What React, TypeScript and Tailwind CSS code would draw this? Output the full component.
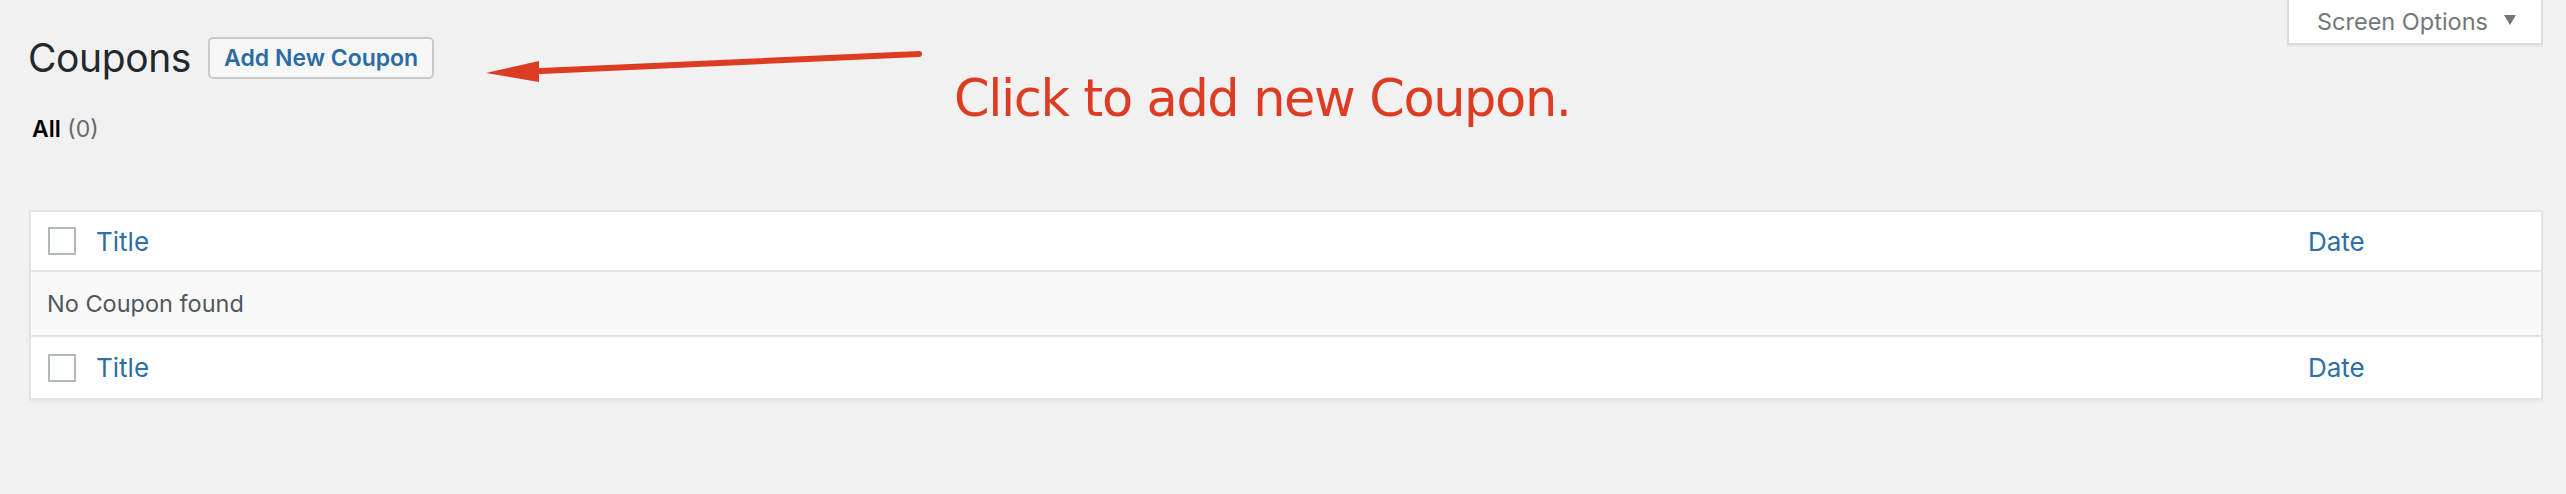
import React from 'react'

const font = { fontFamily: 'Inter, "Noto Sans", sans-serif' }

function Checkbox() {
  return <span className="block h-[28px] w-[28px] shrink-0 border-2 border-[#b4b9be] bg-white" />
}

function HeadRow({ last }: { last?: boolean }) {
  return (
    <div
      className={
        'flex items-center bg-white pl-[17px] ' +
        (last ? 'h-[61px]' : 'h-[60px] border-b-2 border-[#e2e4e7]')
      }
    >
      <Checkbox />
      <span className="ml-[20px] flex-1 text-[26px] text-[#2f6ea6]">Title</span>
      <span className="w-[233px] text-[26px] text-[#2f6ea6]">Date</span>
    </div>
  )
}

function Annotation() {
  return (
    <>
      <svg
        className="pointer-events-none absolute left-0 top-0"
        width="1000"
        height="120"
        viewBox="0 0 1000 120"
        aria-hidden="true"
      >
        <line x1="919" y1="54" x2="530" y2="71.5" stroke="#dc3c22" strokeWidth="6" strokeLinecap="round" />
        <polygon points="486,73 539,61 539,82" fill="#dc3c22" />
      </svg>
      <p
        className="pointer-events-none absolute left-[954px] top-[73px] whitespace-nowrap text-[51px] leading-[51px] tracking-[-1.4px] text-[#de3c22]"
        style={{ fontFamily: '"DejaVu Sans", Verdana, sans-serif' }}
      >
        Click to add new Coupon.
      </p>
    </>
  )
}

export default function App() {
  return (
    <div className="relative h-[494px] w-full overflow-hidden bg-[#f1f1f1] pl-[28px] pr-[23px]" style={font}>
      <div className="flex items-start justify-between">
        <div className="mt-[37px] flex items-center gap-[17px]">
          <h1 className="text-[39px] leading-[42px] font-normal tracking-[-0.4px] text-[#23282d]">Coupons</h1>
          <button
            type="button"
            className="h-[42px] rounded-[5px] border-2 border-[#c9cacb] bg-[#f7f7f7] px-[14px] text-[23px] font-semibold leading-none text-[#2b6ca3]"
          >
            Add New Coupon
          </button>
        </div>
        <button
          type="button"
          className="flex h-[45px] w-[256px] items-center border-x-2 border-b-2 border-[#dcdcdc] bg-white pl-[28px] text-[23.5px] text-[#72777c] shadow-[0_2px_0_rgba(0,0,0,0.04)]"
        >
          Screen Options
          <svg className="ml-[16px] mt-[-4px]" width="12" height="10" viewBox="0 0 12 10" aria-hidden="true">
            <polygon points="0,0 12,0 6,10" fill="#72777c" />
          </svg>
        </button>
      </div>

      <div className="ml-[4px] mt-[34px] text-[23px] leading-[32px]">
        <span className="font-semibold text-black">All</span>{' '}
        <span className="text-[#646970]">(0)</span>
      </div>

      <div className="ml-[1px] mt-[65px] border-2 border-[#e2e4e7] shadow-[0_2px_2px_rgba(0,0,0,0.04)]">
        <HeadRow />
        <div className="flex h-[65px] items-center border-b-2 border-[#e2e4e7] bg-[#f9f9f9] pl-[16px] text-[23.5px] text-[#50575e]">
          No Coupon found
        </div>
        <HeadRow last />
      </div>

      <Annotation />
    </div>
  )
}
